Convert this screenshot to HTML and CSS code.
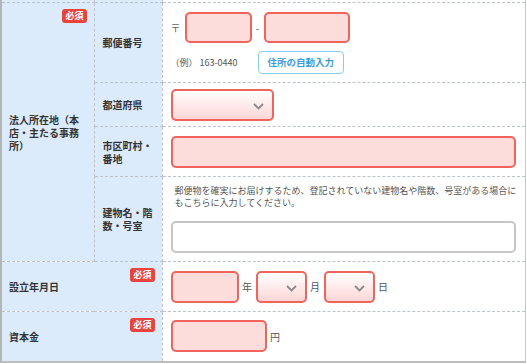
FILE: index.html
```html
<!DOCTYPE html>
<html lang="ja">
<head>
    <meta charset="UTF-8">
    <meta name="viewport" content="width=device-width, initial-scale=1.0">
    <title>法人情報入力</title>
    <link rel="stylesheet" href="styles.css">
</head>
<body>

    <table class="form-table">
        <colgroup>
            <col class="col-main">
            <col class="col-sub">
            <col class="col-field">
        </colgroup>

        <!-- tail of the previous row (page is scrolled) -->
        <tr class="row-spacer">
            <th></th>
            <th></th>
            <td></td>
        </tr>

        <!-- 法人所在地 -->
        <tr class="row-zip">
            <th rowspan="4" class="head-main">
                <span class="badge">必須</span>
                法人所在地（本店・主たる事務所）
            </th>
            <th class="head-sub">郵便番号</th>
            <td class="field">
                <div class="zip-line">
                    <span class="zip-mark">〒</span>
                    <input type="text" class="input req zip1">
                    <span class="zip-dash">-</span>
                    <input type="text" class="input req zip2">
                </div>
                <div class="zip-help">
                    <span class="example">（例） 163-0440</span>
                    <button type="button" class="btn-auto">住所の自動入力</button>
                </div>
            </td>
        </tr>
        <tr class="row-pref">
            <th class="head-sub">都道府県</th>
            <td class="field">
                <span class="select req pref">
                    <svg width="11" height="7" viewBox="0 0 11 7"><path d="M1 1l4.5 4.5L10 1" fill="none" stroke="#8a8a8a" stroke-width="1.8"/></svg>
                </span>
            </td>
        </tr>
        <tr class="row-city">
            <th class="head-sub">市区町村・番地</th>
            <td class="field">
                <input type="text" class="input req wide">
            </td>
        </tr>
        <tr class="row-building">
            <th class="head-sub">建物名・階数・号室</th>
            <td class="field">
                <p class="note">郵便物を確実にお届けするため、登記されていない建物名や階数、号室がある場合に<br>もこちらに入力してください。</p>
                <input type="text" class="input plain wide">
            </td>
        </tr>

        <!-- 設立年月日 -->
        <tr class="row-date">
            <th colspan="2" class="head-main">
                <span class="badge">必須</span>
                設立年月日
            </th>
            <td class="field">
                <div class="inline-fields">
                    <input type="text" class="input req year">
                    <span class="unit">年</span>
                    <span class="select req small">
                        <svg width="11" height="7" viewBox="0 0 11 7"><path d="M1 1l4.5 4.5L10 1" fill="none" stroke="#8a8a8a" stroke-width="1.8"/></svg>
                    </span>
                    <span class="unit">月</span>
                    <span class="select req small">
                        <svg width="11" height="7" viewBox="0 0 11 7"><path d="M1 1l4.5 4.5L10 1" fill="none" stroke="#8a8a8a" stroke-width="1.8"/></svg>
                    </span>
                    <span class="unit">日</span>
                </div>
            </td>
        </tr>

        <!-- 資本金 -->
        <tr class="row-capital">
            <th colspan="2" class="head-main">
                <span class="badge">必須</span>
                資本金
            </th>
            <td class="field">
                <div class="inline-fields">
                    <input type="text" class="input req capital">
                    <span class="unit">円</span>
                </div>
            </td>
        </tr>
    </table>

</body>
</html>
```

FILE: styles.css
```css
/* Basic Styling */
body {
    margin: 0;
    font-family: "Noto Sans CJK JP", "Noto Sans", sans-serif;
    color: #333;
    background-color: #fff;
}

.form-table {
    border-collapse: collapse;
    table-layout: fixed;
    width: 526px;
    border-left: 2px solid #b4b4b4;
    border-right: 1px solid #c8c8c8;
    border-bottom: 2px solid #bdbdbd;
}

.col-main {
    width: 93px;
}

.col-sub {
    width: 68px;
}

th,
td {
    border: 1px dashed #bcc3cb;
    padding: 0;
    vertical-align: middle;
}

th {
    background-color: #dcebfc;
    text-align: left;
    font-size: 10px;
    font-weight: bold;
    line-height: 13px;
}

.row-spacer th,
.row-spacer td {
    height: 2px;
    border-top: none;
}

.row-zip {
    height: 80px;
}

.row-pref {
    height: 44px;
}

.row-city {
    height: 50px;
}

.row-building {
    height: 85px;
}

.row-date,
.row-capital {
    height: 50px;
}

.head-main {
    position: relative;
    padding: 0 8px 0 7px;
}

.head-sub {
    padding: 0 8px;
}

.badge {
    position: absolute;
    top: 6px;
    right: 7px;
    padding: 1px 3px;
    border-radius: 3px;
    background-color: #e8433f;
    color: #fff;
    font-size: 9px;
    line-height: 12px;
}

.field {
    padding: 0 9px 0 8px;
}

/* Inputs */
.input {
    box-sizing: border-box;
    display: block;
    height: 32px;
    margin: 0;
    border-radius: 5px;
    font-family: inherit;
}

.req {
    border: 2px solid #f0645c;
    background-color: #fddcdc;
}

.plain {
    border: 2px solid #c6c6c6;
    background-color: #fff;
}

.wide {
    width: 100%;
}

.select {
    box-sizing: border-box;
    position: relative;
    display: block;
    height: 32px;
    border-radius: 5px;
    background: linear-gradient(#fff, #fdd6d6);
}

.select svg {
    position: absolute;
    right: 8px;
    top: 12px;
}

.pref {
    width: 103px;
}

.small {
    width: 51px;
}

/* Postal code */
.zip-line {
    display: flex;
    align-items: center;
}

.zip-mark {
    width: 14px;
    font-size: 10px;
    color: #666;
}

.zip1 {
    width: 67px;
    height: 31px;
}

.zip-dash {
    width: 12px;
    text-align: center;
    font-size: 10px;
    color: #555;
}

.zip2 {
    width: 86px;
    height: 31px;
}

.zip-help {
    display: flex;
    align-items: center;
    gap: 20px;
    margin-top: 8px;
}

.example {
    font-size: 9px;
    color: #555;
}

.btn-auto {
    height: 23px;
    padding: 0 9px;
    border: 1px solid #86ccee;
    border-radius: 4px;
    background-color: #fff;
    color: #3d9bd8;
    font-family: inherit;
    font-size: 9.5px;
    font-weight: bold;
}

/* Building */
.note {
    margin: 0 0 12px;
    padding-left: 4px;
    font-size: 9px;
    line-height: 12px;
    color: #555;
    white-space: nowrap;
}

/* Date and capital */
.inline-fields {
    display: flex;
    align-items: center;
}

.year {
    width: 68px;
}

.capital {
    width: 96px;
}

.unit {
    width: 17px;
    text-align: center;
    font-size: 10px;
    color: #555;
}
```
